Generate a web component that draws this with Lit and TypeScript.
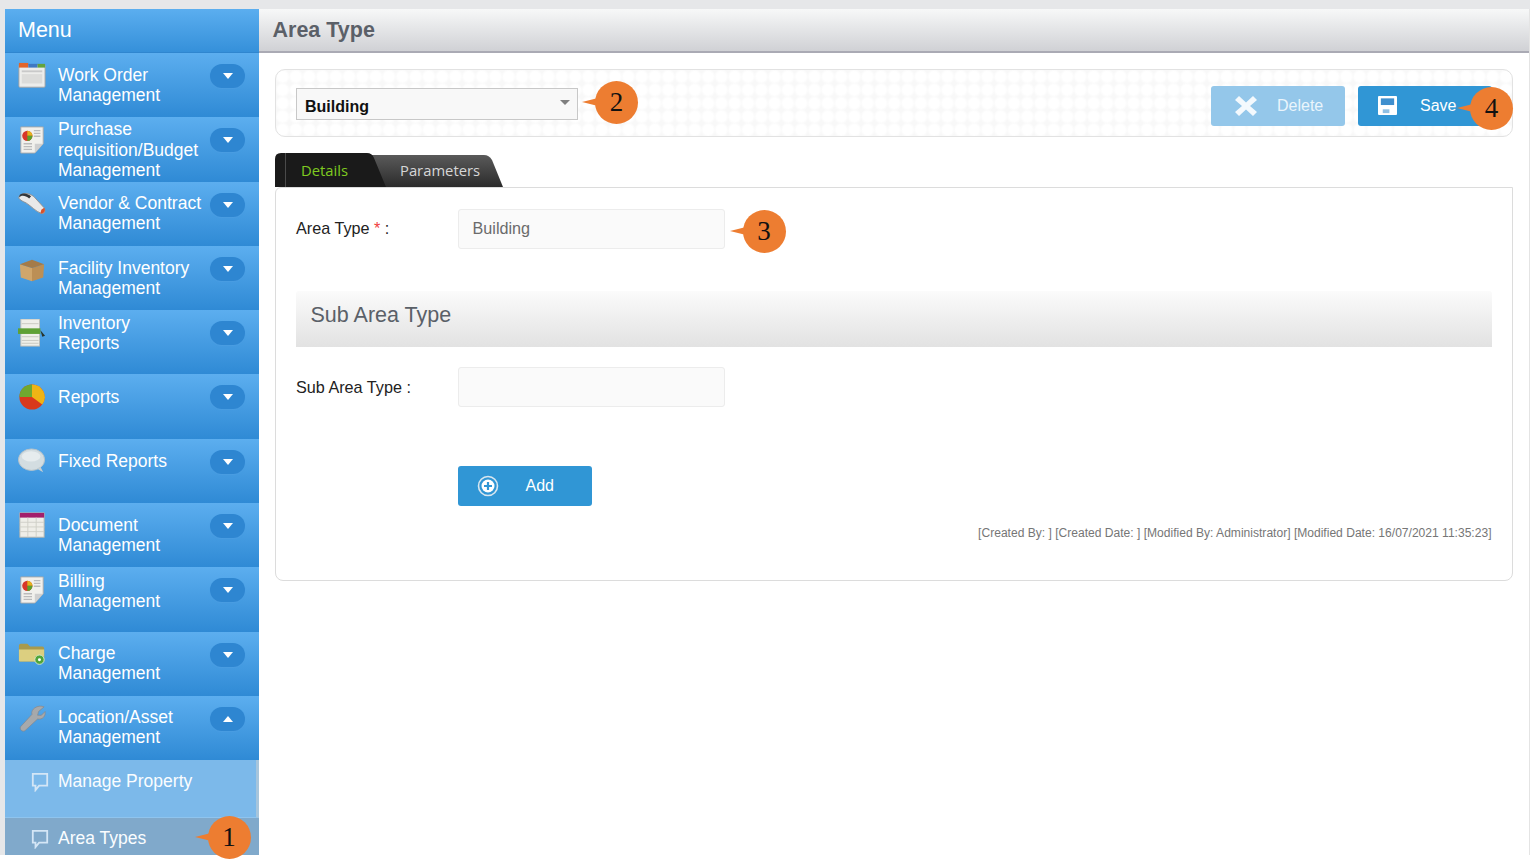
import { LitElement, html, css, svg } from "lit";
import { customElement } from "lit/decorators.js";

// menu icons, all drawn on a 30x30 box
const docIcon = svg`
  <path d="M3 1H27V19L18 29H3Z" fill="#f1f0ec" stroke="#a9a9a9"/>
  <path d="M18 29V19H27Z" fill="#cfcfcf"/>
  <path d="M17 5H24M17 8H24M17 11H24M6 19H15M6 22H15M6 25H15" stroke="#bbb" stroke-width="1.4"/>
  <circle cx="10" cy="10.5" r="5.5" fill="#d8372a"/>
  <path d="M10 10.5V5A5.5 5.5 0 0 1 15.5 10.5Z" fill="#e6b31e"/>
  <path d="M10 10.5H15.5A5.5 5.5 0 0 1 10 16Z" fill="#5ca02c"/>`;

const icons: Record<string, unknown> = {
  window: svg`
    <rect x="1" y="3" width="28" height="24" rx="1" fill="#ededeb" stroke="#a3a3a3"/>
    <rect x="1" y="1" width="10" height="5" fill="#e2652a"/>
    <rect x="11" y="2" width="10" height="4" fill="#3f78c2"/>
    <rect x="21" y="2" width="8" height="4" fill="#63a33c"/>
    <rect x="4" y="9" width="22" height="2" fill="#c9c9c9"/>
    <rect x="4" y="13" width="22" height="10" fill="#dcdcda"/>`,
  doc: docIcon,
  mouse: svg`
    <path d="M1 6C5 1 12 2 17 6L28 18C30 22 28 25 25 24C19 22 14 16 9 13C5 11 0 9 1 6Z" fill="#e9e9e9" stroke="#8f8f8f"/>
    <path d="M1 7C4 4 8 5 12 8L14 5.500C10 2.500 5 2 2 4Z" fill="#33363a"/>
    <path d="M24 24C28 25 30 21 28 18L25 20Z" fill="#d9512c"/>`,
  box: svg`
    <path d="M2 10L15 14V28L3 24Z" fill="#d0a66b"/>
    <path d="M28 10L15 14V28L27 24Z" fill="#bc8f55"/>
    <path d="M2 10L15 5L28 10L15 14Z" fill="#a47b49"/>`,
  list: svg`
    <rect x="3" y="0" width="20" height="29" fill="#efefe9" stroke="#bdbdb5"/>
    <path d="M4 5H22M4 19H22M4 23H22M4 26H22" stroke="#c7c7c0"/>
    <rect x="0" y="10" width="24" height="6" fill="#5fa135"/>
    <path d="M24 12L29 18L26 19Z" fill="#28332a"/>`,
  pie: svg`
    <circle cx="15" cy="15" r="13.5" fill="#d9391c"/>
    <path d="M15 15V1.5A13.5 13.5 0 0 1 26 23Z" fill="#efb415"/>
    <path d="M15 15V1.5A13.5 13.5 0 0 0 1.5 15Z" fill="#6fa82f"/>`,
  bubble: svg`
    <ellipse cx="14.500" cy="12.500" rx="14" ry="11.500" fill="#d3dde1" stroke="#b8c2c6"/>
    <ellipse cx="14" cy="9" rx="10" ry="5.500" fill="#e6ecee"/>
    <path d="M20 22L27 26L24 20Z" fill="#c4ced2"/>`,
  table: svg`
    <rect x="2" y="1" width="26" height="26" fill="#efeee8" stroke="#b5b5ad"/>
    <rect x="2" y="1" width="26" height="5" fill="#a31f6b"/>
    <path d="M10.500 6V27M19.500 6V27M2 11H28M2 16H28M2 21H28" stroke="#cfcfc7"/>`,
  folder: svg`
    <path d="M1 5Q1 3 3 3H10L13 6H26Q28 6 28 8V22H1Z" fill="#a89a4e"/>
    <path d="M1 9H28V21Q28 22 27 22H2Q1 22 1 21Z" fill="#dccf80"/>
    <circle cx="23" cy="20" r="5" fill="#4fa53a" stroke="#d6e8c8"/>
    <circle cx="23" cy="20" r="1.600" fill="#fff"/>`,
  wrench: svg`
    <path d="M28 2L22 7L21 11L25 11L29 7C30 12 26 16 21 15L8 27C5 30 1 26 3 23L15 10C13 5 21 -1 28 2Z" fill="#a7a9ab" stroke="#84868a" stroke-width=".7"/>`,
};

interface MenuItem {
  lines: string[];
  icon: string;
  pad: number;
  open?: boolean;
}

const menu: MenuItem[] = [
  { lines: ["Work Order", "Management"], icon: "window", pad: 12 },
  { lines: ["Purchase", "requisition/Budget", "Management"], icon: "doc", pad: 2 },
  { lines: ["Vendor & Contract", "Management"], icon: "mouse", pad: 11.5 },
  { lines: ["Facility Inventory", "Management"], icon: "box", pad: 12 },
  { lines: ["Inventory", "Reports"], icon: "list", pad: 3 },
  { lines: ["Reports"], icon: "pie", pad: 13 },
  { lines: ["Fixed Reports"], icon: "bubble", pad: 12 },
  { lines: ["Document", "Management"], icon: "table", pad: 12 },
  { lines: ["Billing", "Management"], icon: "doc", pad: 3.5 },
  { lines: ["Charge", "Management"], icon: "folder", pad: 11.5 },
  { lines: ["Location/Asset", "Management"], icon: "wrench", pad: 11, open: true },
];

const subIcon = html`<svg class="sub-icon" viewBox="0 0 20 22">
  <path d="M2 2H18V15H9L5 20V15H2Z" fill="none" stroke="#d4e6f6" stroke-width="2"/>
</svg>`;

@customElement("app-root")
export class AppRoot extends LitElement {
  static styles = css`
    :host {
      display: block;
      font-family: "Liberation Sans", Arial, sans-serif;
      background: #fff;
    }
    .page {
      position: relative;
      height: 866px;
      overflow: hidden;
    }
    .top-strip {
      height: 8.5px;
      width: 1530px;
      background: #e6e7e9;
    }
    .shell {
      display: flex;
      width: 1530px;
      height: 846.5px;
    }
    .left-strip {
      width: 4.5px;
      background: #e6e7e9;
    }

    /* sidebar */
    .sidebar {
      width: 254px;
      flex: none;
      color: #fff;
      font-size: 17.5px;
      line-height: 20.2px;
    }
    .menu-head {
      height: 44.5px;
      box-sizing: border-box;
      padding: 8px 0 0 13.5px;
      font-size: 21.5px;
      line-height: 26px;
      background: linear-gradient(#5baeef, #3590da);
      border-bottom: 1px solid #2f86cf;
    }
    .item {
      height: 64.3px;
      box-sizing: border-box;
      display: grid;
      grid-template-columns: 53.5px 1fr 35px;
      padding-right: 13.5px;
      background: linear-gradient(#5caeef, #2f8ad5);
      overflow: hidden;
    }
    .item-icon {
      width: 28px;
      height: 28px;
      margin: 9px 0 0 13.5px;
    }
    .pill {
      width: 35px;
      height: 24px;
      margin-top: 11px;
      border-radius: 12px;
      background: #2e86d1;
      box-shadow: 0 1px 1px #4a9de2;
      display: flex;
      align-items: center;
      justify-content: center;
    }
    .caret {
      width: 0;
      height: 0;
      border-left: 5.5px solid transparent;
      border-right: 5.5px solid transparent;
      border-top: 6px solid #fff;
    }
    .caret.up {
      border-top: 0;
      border-bottom: 6px solid #fff;
    }
    .sub {
      display: flex;
      align-items: flex-start;
      box-sizing: border-box;
      background: #7cb9ea;
      color: #fafdff;
      border-right: 3px solid #a6c5dc;
    }
    .sub.first {
      height: 58px;
      padding: 11px 0 0 26px;
      border-bottom: 1px solid #8fc4ee;
    }
    .sub.active {
      height: 37px;
      padding: 10px 0 0 26px;
      background: #80a9cb;
      border-right: 0;
    }
    .sub-icon {
      width: 18px;
      height: 20px;
      margin: 1px 9.5px 0 0;
    }

    /* main column */
    .main {
      flex: 1;
      min-width: 0;
      border-right: 1px solid #e4e4e4;
    }
    .title {
      height: 44.5px;
      box-sizing: border-box;
      padding: 8px 0 0 14px;
      font-size: 21.5px;
      line-height: 26px;
      font-weight: bold;
      color: #5b6068;
      background: linear-gradient(#f7f8f8, #d0d1d5);
      border-bottom: 2px solid #aaaab4;
    }
    .content {
      padding: 16px 16px 0 16.5px;
    }
    .toolbar {
      height: 68px;
      box-sizing: border-box;
      display: flex;
      align-items: flex-start;
      border: 1.5px solid #e2e2e2;
      border-radius: 10px;
      padding: 17.5px 20px 0 20px;
      background-color: #f9f9f9;
      background-image: radial-gradient(circle, #fff 5px, #f8f8f8 7.5px);
      background-size: 13.3px 13.3px;
    }
    .select {
      width: 282px;
      height: 32px;
      box-sizing: border-box;
      border: 1px solid #c8c8c8;
      background: #f8f8f8;
      display: flex;
      align-items: center;
      justify-content: space-between;
      padding: 0 7px 0 8px;
      font-size: 16px;
      font-weight: bold;
      color: #111;
    }
    .select-text {
      padding-top: 7px;
    }
    .select .arrow {
      width: 0;
      height: 0;
      margin-bottom: 3px;
      border-left: 5px solid transparent;
      border-right: 5px solid transparent;
      border-top: 5px solid #7f7f7f;
    }
    .actions {
      margin: -2px 0 0 auto;
      display: flex;
      gap: 13px;
    }
    .btn {
      height: 40px;
      width: 134px;
      box-sizing: border-box;
      border-radius: 3px;
      background: #3096d5;
      color: #fff;
      font-size: 16px;
      display: flex;
      align-items: center;
    }
    .btn span {
      padding-top: 1.5px;
    }
    .btn.off {
      background: #94c7ea;
      color: #eaf5fc;
      padding-left: 23px;
    }
    .btn.save {
      padding-left: 20px;
    }
    .btn svg {
      flex: none;
    }
    .btn.off span {
      margin-left: 19px;
    }
    .btn.save span {
      margin-left: 23px;
    }

    /* tabs */
    .tabs {
      display: flex;
      height: 34px;
      margin-top: 16px;
    }
    .tab {
      box-sizing: border-box;
      height: 34px;
      font-family: "Open Sans", "Liberation Sans", sans-serif;
      font-size: 14.8px;
      line-height: 34px;
    }
    .tab.on {
      position: relative;
      z-index: 1;
      width: 111px;
      padding-left: 26px;
      color: #7fca20;
      background: linear-gradient(90deg, #1a1a1a 10.5px, #4a4a4a 10.5px, #4a4a4a 11.5px, #1a1a1a 11.5px);
      clip-path: path("M0 34V6Q0 0 6 0H92Q97 0 99 5L111 34Z");
    }
    .tab.off {
      width: 138px;
      height: 32px;
      margin: 2px 0 0 -21px;
      padding-left: 35px;
      line-height: 30px;
      color: #d6d6d6;
      background: linear-gradient(#5a5a5a, #2b2b2b);
      clip-path: path("M0 32V0H119Q124 0 127 5L138 32Z");
    }

    /* form panel */
    .panel {
      height: 394px;
      box-sizing: border-box;
      border: 1.5px solid #dcdcdc;
      border-top-width: 1px;
      border-radius: 6px 0 8px 8px;
      padding: 20.5px 20.5px 0 19.5px;
      font-size: 16.2px;
      color: #222;
    }
    .field {
      display: flex;
      align-items: center;
    }
    .field label {
      width: 161.5px;
      padding-left: 0.5px;
      flex: none;
    }
    .req {
      color: #f04040;
    }
    .input {
      width: 267px;
      height: 40px;
      box-sizing: border-box;
      border: 1px solid #ececec;
      border-radius: 3px;
      background: #fafafa;
      padding-left: 14px;
      line-height: 37px;
      color: #6b6b6b;
    }
    .section {
      height: 56px;
      box-sizing: border-box;
      margin-top: 42px;
      padding: 11px 0 0 15px;
      font-size: 21.5px;
      line-height: 26px;
      color: #5a6068;
      border-radius: 3px 3px 0 0;
      background: linear-gradient(#fbfbfb, #e2e2e2);
    }
    .field.sub-field {
      margin-top: 20px;
    }
    .sub-field label {
      padding-top: 1.5px;
    }
    .add {
      margin: 59px 0 0 162px;
      padding-left: 19px;
    }
    .add span {
      margin-left: 27px;
    }
    .audit {
      margin-top: 20px;
      text-align: right;
      font-size: 12.07px;
      line-height: 14px;
      color: #767676;
    }

    /* numbered callouts lying over the page */
    .callout {
      position: absolute;
      width: 43px;
      height: 43px;
      border-radius: 50%;
      background: #ed7d31;
      color: #111;
      font-family: "Liberation Serif", serif;
      font-size: 27px;
      line-height: 43px;
      text-align: center;
    }
    .callout::before {
      content: "";
      position: absolute;
      left: -13px;
      top: 17px;
      border-right: 16px solid #ed7d31;
      border-top: 4.5px solid transparent;
      border-bottom: 4.5px solid transparent;
    }
    .c1 { left: 207.5px; top: 815.5px; }
    .c2 { left: 595px; top: 80.5px; }
    .c3 { left: 742.5px; top: 210px; }
    .c4 { left: 1470px; top: 86.5px; }
  `;

  renderItem(m: MenuItem) {
    return html`<div class="item">
      <svg class="item-icon" viewBox="0 0 30 30">${icons[m.icon]}</svg>
      <div style="margin-top:${m.pad}px">
        ${m.lines.map((l, i) => html`${i ? html`<br />` : ""}${l}`)}
      </div>
      <div class="pill"><div class="caret ${m.open ? "up" : ""}"></div></div>
    </div>`;
  }

  render() {
    return html`<div class="page">
      <div class="top-strip"></div>
      <div class="shell">
        <div class="left-strip"></div>
        <nav class="sidebar">
          <div class="menu-head">Menu</div>
          ${menu.map((m) => this.renderItem(m))}
          <div class="sub first">${subIcon}Manage Property</div>
          <div class="sub active">${subIcon}Area Types</div>
        </nav>
        <div class="main">
          <div class="title">Area Type</div>
          <div class="content">
            <div class="toolbar">
              <div class="select"><span class="select-text">Building</span><span class="arrow"></span></div>
              <div class="actions">
                <div class="btn off">
                  <svg width="24" height="24" viewBox="0 0 24 24">
                    <path d="M5 2L12 8.5L19 2L23 6L16 12L23 18L19 22L12 15.5L5 22L1 18L8 12L1 6Z" fill="#f4f9fd" />
                  </svg>
                  <span>Delete</span>
                </div>
                <div class="btn save">
                  <svg width="19" height="19" viewBox="0 0 20 20">
                    <path d="M0 1Q0 0 1 0H19Q20 0 20 1V19Q20 20 19 20H1Q0 20 0 19Z" fill="#fff" />
                    <rect x="3" y="2.5" width="14" height="7" fill="#3f8fce" />
                    <rect x="5" y="14" width="7" height="4" fill="#8fc0e4" />
                  </svg>
                  <span>Save</span>
                </div>
              </div>
            </div>
            <div class="tabs">
              <div class="tab on">Details</div>
              <div class="tab off">Parameters</div>
            </div>
            <div class="panel">
              <div class="field">
                <label>Area Type <span class="req">*</span> :</label>
                <div class="input">Building</div>
              </div>
              <div class="section">Sub Area Type</div>
              <div class="field sub-field">
                <label>Sub Area Type :</label>
                <div class="input"></div>
              </div>
              <div class="btn add">
                <svg width="22" height="22" viewBox="0 0 22 22">
                  <circle cx="11" cy="11" r="9.5" fill="none" stroke="#d8e6ef" stroke-width="1.6" />
                  <circle cx="11" cy="11" r="6.5" fill="#fff" />
                  <path d="M11 7V15M7 11H15" stroke="#3096d5" stroke-width="2.2" />
                </svg>
                <span>Add</span>
              </div>
              <div class="audit">
                [Created By: ] [Created Date: ] [Modified By: Administrator] [Modified Date: 16/07/2021 11:35:23]
              </div>
            </div>
          </div>
        </div>
      </div>
      <div class="callout c1">1</div>
      <div class="callout c2">2</div>
      <div class="callout c3">3</div>
      <div class="callout c4">4</div>
    </div>`;
  }
}
